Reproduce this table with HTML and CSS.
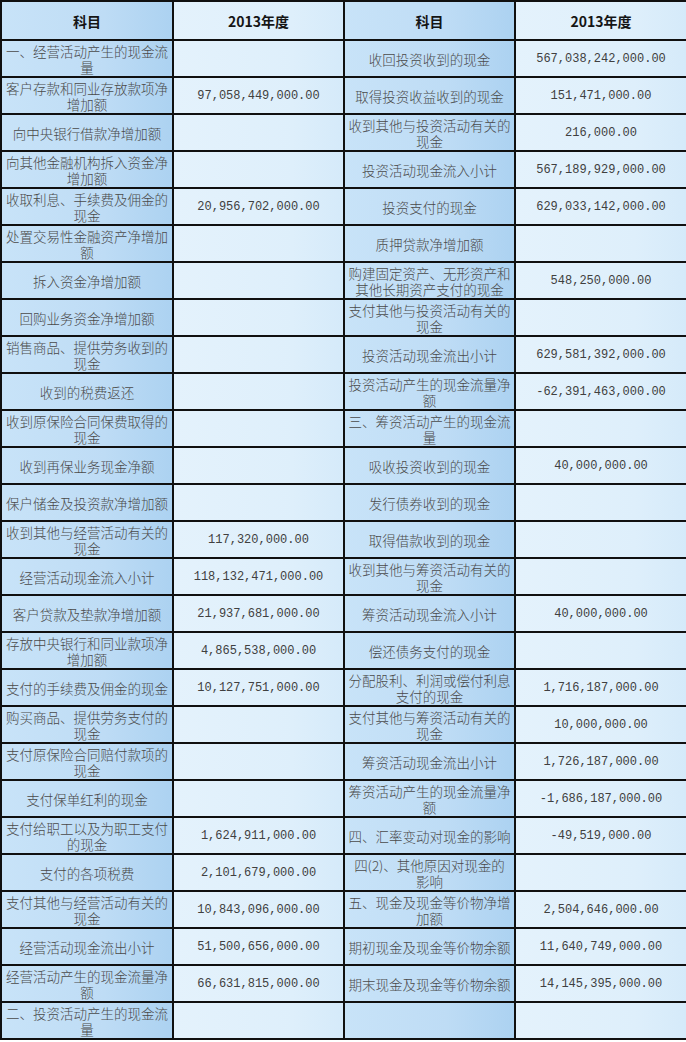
FILE: index.html
```html
<!DOCTYPE html>
<html lang="zh">
<head>
<meta charset="utf-8">
<link rel="stylesheet" href="styles.css">
</head>
<body>
<table class="sheet">
<colgroup><col class="c1"><col class="c2"><col class="c3"><col class="c4"></colgroup>
<thead>
<tr class="head"><th class="lab">科目</th><th class="val">2013年度</th><th class="lab">科目</th><th class="val">2013年度</th></tr>
</thead>
<tbody>
<tr><td class="lab">一、经营活动产生的现金流量</td><td class="val"></td><td class="lab">收回投资收到的现金</td><td class="val">567,038,242,000.00</td></tr>
<tr><td class="lab">客户存款和同业存放款项净增加额</td><td class="val">97,058,449,000.00</td><td class="lab">取得投资收益收到的现金</td><td class="val">151,471,000.00</td></tr>
<tr><td class="lab">向中央银行借款净增加额</td><td class="val"></td><td class="lab">收到其他与投资活动有关的现金</td><td class="val">216,000.00</td></tr>
<tr><td class="lab">向其他金融机构拆入资金净增加额</td><td class="val"></td><td class="lab">投资活动现金流入小计</td><td class="val">567,189,929,000.00</td></tr>
<tr><td class="lab">收取利息、手续费及佣金的现金</td><td class="val">20,956,702,000.00</td><td class="lab">投资支付的现金</td><td class="val">629,033,142,000.00</td></tr>
<tr><td class="lab">处置交易性金融资产净增加额</td><td class="val"></td><td class="lab">质押贷款净增加额</td><td class="val"></td></tr>
<tr><td class="lab">拆入资金净增加额</td><td class="val"></td><td class="lab">购建固定资产、无形资产和其他长期资产支付的现金</td><td class="val">548,250,000.00</td></tr>
<tr><td class="lab">回购业务资金净增加额</td><td class="val"></td><td class="lab">支付其他与投资活动有关的现金</td><td class="val"></td></tr>
<tr><td class="lab">销售商品、提供劳务收到的现金</td><td class="val"></td><td class="lab">投资活动现金流出小计</td><td class="val">629,581,392,000.00</td></tr>
<tr><td class="lab">收到的税费返还</td><td class="val"></td><td class="lab">投资活动产生的现金流量净额</td><td class="val">-62,391,463,000.00</td></tr>
<tr><td class="lab">收到原保险合同保费取得的现金</td><td class="val"></td><td class="lab">三、筹资活动产生的现金流量</td><td class="val"></td></tr>
<tr><td class="lab">收到再保业务现金净额</td><td class="val"></td><td class="lab">吸收投资收到的现金</td><td class="val">40,000,000.00</td></tr>
<tr><td class="lab">保户储金及投资款净增加额</td><td class="val"></td><td class="lab">发行债券收到的现金</td><td class="val"></td></tr>
<tr><td class="lab">收到其他与经营活动有关的现金</td><td class="val">117,320,000.00</td><td class="lab">取得借款收到的现金</td><td class="val"></td></tr>
<tr><td class="lab">经营活动现金流入小计</td><td class="val">118,132,471,000.00</td><td class="lab">收到其他与筹资活动有关的现金</td><td class="val"></td></tr>
<tr><td class="lab">客户贷款及垫款净增加额</td><td class="val">21,937,681,000.00</td><td class="lab">筹资活动现金流入小计</td><td class="val">40,000,000.00</td></tr>
<tr><td class="lab">存放中央银行和同业款项净增加额</td><td class="val">4,865,538,000.00</td><td class="lab">偿还债务支付的现金</td><td class="val"></td></tr>
<tr><td class="lab">支付的手续费及佣金的现金</td><td class="val">10,127,751,000.00</td><td class="lab">分配股利、利润或偿付利息支付的现金</td><td class="val">1,716,187,000.00</td></tr>
<tr><td class="lab">购买商品、提供劳务支付的现金</td><td class="val"></td><td class="lab">支付其他与筹资活动有关的现金</td><td class="val">10,000,000.00</td></tr>
<tr><td class="lab">支付原保险合同赔付款项的现金</td><td class="val"></td><td class="lab">筹资活动现金流出小计</td><td class="val">1,726,187,000.00</td></tr>
<tr><td class="lab">支付保单红利的现金</td><td class="val"></td><td class="lab">筹资活动产生的现金流量净额</td><td class="val">-1,686,187,000.00</td></tr>
<tr><td class="lab">支付给职工以及为职工支付的现金</td><td class="val">1,624,911,000.00</td><td class="lab">四、汇率变动对现金的影响</td><td class="val">-49,519,000.00</td></tr>
<tr><td class="lab">支付的各项税费</td><td class="val">2,101,679,000.00</td><td class="lab narrow">四(2)、其他原因对现金的影响</td><td class="val"></td></tr>
<tr><td class="lab">支付其他与经营活动有关的现金</td><td class="val">10,843,096,000.00</td><td class="lab">五、现金及现金等价物净增加额</td><td class="val">2,504,646,000.00</td></tr>
<tr><td class="lab">经营活动现金流出小计</td><td class="val">51,500,656,000.00</td><td class="lab">期初现金及现金等价物余额</td><td class="val">11,640,749,000.00</td></tr>
<tr><td class="lab">经营活动产生的现金流量净额</td><td class="val">66,631,815,000.00</td><td class="lab">期末现金及现金等价物余额</td><td class="val">14,145,395,000.00</td></tr>
<tr><td class="lab">二、投资活动产生的现金流量</td><td class="val"></td><td class="lab"></td><td class="val"></td></tr>
</tbody>
</table>
</body>
</html>
```
FILE: styles.css
```css
html, body {
  margin: 0;
  padding: 0;
  background: #ffffff;
}

.sheet {
  width: 686px;
  table-layout: fixed;
  border-collapse: collapse;
  border: 2px solid #101010;
}

.c1 { width: 172px; }
.c2 { width: 171px; }
.c3 { width: 171px; }
.c4 { width: 172px; }

.sheet th,
.sheet td {
  border: 2px solid #101010;
  padding: 0 1px;
  text-align: center;
  vertical-align: middle;
  overflow: hidden;
}

.sheet tbody tr {
  height: 37px;
}

.sheet .head {
  height: 39px;
}

.sheet th {
  font-family: "Noto Sans CJK SC", "Liberation Sans", sans-serif;
  font-weight: bold;
  font-size: 14px;
  color: #151515;
}

.lab {
  background: linear-gradient(to right, #c8e3f8 0%, #bedcf5 60%, #acd2f1 100%);
}

.val {
  background: linear-gradient(to right, #e4f2fc 0%, #deeffb 70%, #d5eafa 100%);
}

td.lab {
  font-family: "Noto Sans CJK SC", sans-serif;
  font-weight: 300;
  font-size: 13.5px;
  line-height: 16px;
  color: #4a4a4a;
}

.sheet td.narrow {
  padding: 0 7px;
}

td.val {
  font-family: "Liberation Mono", "DejaVu Sans Mono", monospace;
  font-size: 12px;
  color: #404040;
  white-space: nowrap;
}
```
